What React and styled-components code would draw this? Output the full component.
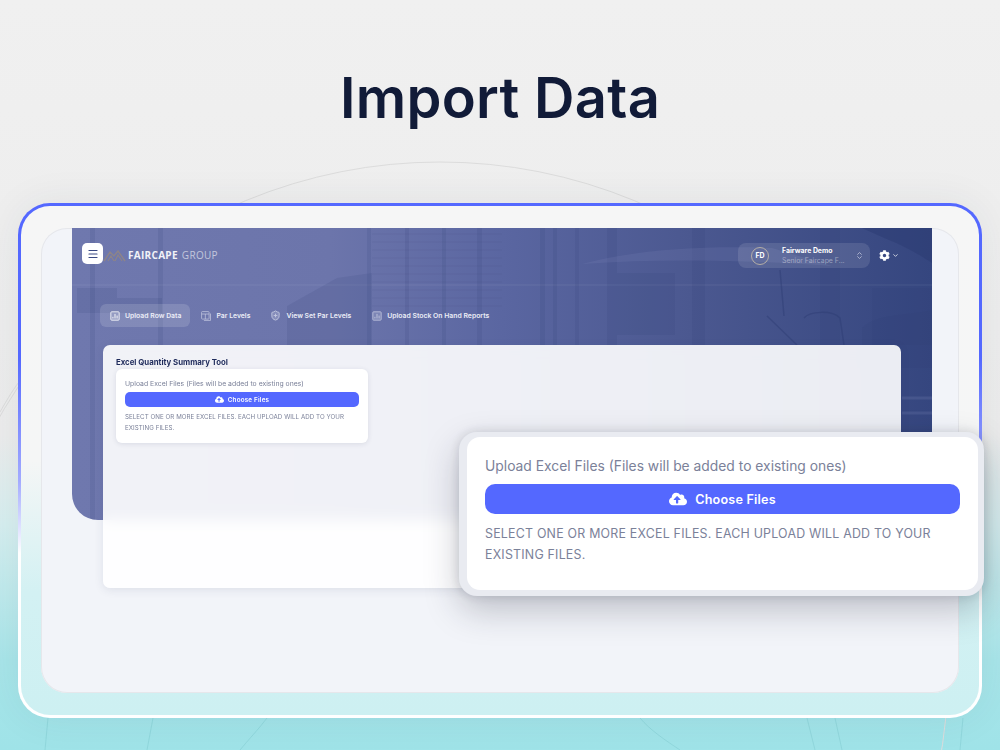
import styled, { createGlobalStyle } from "styled-components";
import { ChevronDown, ChevronsUpDown, Menu, ShieldPlus } from "lucide-react";
import { FaCloudUploadAlt, FaCog } from "react-icons/fa";

const GlobalStyle = createGlobalStyle`
  html, body {
    margin: 0;
    padding: 0;
  }
  body {
    font-family: Inter, "Liberation Sans", sans-serif;
  }
`;

const Page = styled.div`
  position: relative;
  width: 1000px;
  height: 750px;
  overflow: hidden;
  box-sizing: border-box;
  padding: 62px 18px 0;
  display: flex;
  flex-direction: column;
  align-items: center;
  background: linear-gradient(180deg, #f0f0f0 0%, #ececec 58%, #d6eeef 70%, #a8e5e9 88%, #9fe3e8 100%);
`;

const Arcs = styled.svg`
  position: absolute;
  inset: 0;
  width: 1000px;
  height: 750px;
`;

const Title = styled.h1`
  position: relative;
  margin: 0;
  height: 72px;
  font-size: 56px;
  line-height: 72px;
  font-weight: 600;
  letter-spacing: 0.3px;
  color: #111b38;
`;

const Frame = styled.div`
  position: relative;
  margin-top: 69px;
  width: 964px;
  height: 515px;
  box-sizing: border-box;
  padding: 3px;
  border-radius: 32px;
  background: linear-gradient(180deg, #5468ff 0%, #5468ff 30%, #a3abff 54%, #ffffff 68%, #ffffff 100%);
  box-shadow: 0 0 40px rgba(40, 50, 70, 0.07);
`;

const FrameInner = styled.div`
  height: 100%;
  box-sizing: border-box;
  padding: 22px 20px;
  border-radius: 29px;
  background: linear-gradient(180deg, #f6f6f6 0%, #f5f6f6 50%, #d3f1f3 76%, #cdf0f2 100%);
`;

const Panel = styled.div`
  position: relative;
  height: 100%;
  box-sizing: border-box;
  padding: 0 27px 0 31px;
  display: grid;
  grid-template-columns: 1fr;
  grid-template-rows: 1fr;
  border-radius: 26px;
  background: #f2f4f9;
  box-shadow: inset 0 0 0 1px #e6e7eb;
`;

const Hero = styled.section`
  grid-area: 1 / 1;
  position: relative;
  align-self: start;
  height: 292px;
  box-sizing: border-box;
  padding: 15px 33px 0 10px;
  overflow: hidden;
  border-radius: 0 0 0 26px;
  background: linear-gradient(90deg, #6f78ae 0%, #6c75ab 30%, #5a66a1 50%, #4b5890 72%, #35467f 100%);
`;

const Scene = styled.svg`
  position: absolute;
  inset: 0;
  width: 860px;
  height: 292px;
`;

const TopBar = styled.header`
  position: relative;
  display: flex;
  align-items: flex-start;
`;

const MenuButton = styled.button`
  position: relative;
  width: 21px;
  height: 21px;
  padding: 0;
  display: flex;
  align-items: center;
  justify-content: center;
  border: 0;
  border-radius: 5px;
  background: #fff;
  color: #3a4a83;
`;

const Logo = styled.div`
  display: flex;
  align-items: center;
  gap: 2px;
  height: 24px;
  margin-right: auto;
`;

const Brand = styled.span`
  font-family: "Open Sans", sans-serif;
  font-size: 10px;
  letter-spacing: 0.3px;
  font-weight: 700;
  color: #f1f2f8;
  b {
    margin-left: 4px;
    font-weight: 400;
    color: #c3c7dc;
  }
`;

const UserPill = styled.div`
  width: 132px;
  height: 25px;
  box-sizing: border-box;
  padding: 0 6px 0 13px;
  display: flex;
  align-items: center;
  border-radius: 8px;
  background: rgba(255, 255, 255, 0.11);
  color: #fff;
`;

const Avatar = styled.div`
  flex: none;
  width: 18px;
  height: 18px;
  box-sizing: border-box;
  display: flex;
  align-items: center;
  justify-content: center;
  margin-right: 13px;
  border: 1px solid #b5aea6;
  border-radius: 50%;
  font-size: 7px;
  font-weight: 700;
`;

const UserText = styled.div`
  flex: 1;
  display: flex;
  flex-direction: column;
  gap: 2px;
  font-size: 6.9px;
  line-height: 8px;
`;

const UserName = styled.span`
  font-weight: 700;
`;

const UserRole = styled.span`
  color: rgba(255, 255, 255, 0.42);
`;

const Settings = styled.div`
  display: flex;
  align-items: center;
  gap: 2px;
  height: 25px;
  margin-left: 9px;
  color: #fff;
`;

const Nav = styled.nav`
  position: relative;
  display: flex;
  align-items: center;
  margin: 36px 0 0 18px;
`;

const NavItem = styled.a`
  display: flex;
  align-items: center;
  gap: 5px;
  height: 23px;
  box-sizing: border-box;
  padding: 0 9px 0 10px;
  margin-right: ${({ $gap }) => $gap}px;
  border-radius: 6px;
  background: ${({ $active }) => ($active ? "rgba(255, 255, 255, 0.14)" : "transparent")};
  font-size: 6.85px;
  font-weight: 600;
  color: #eceef7;
  white-space: nowrap;
`;

const IconBox = styled.svg`
  flex: none;
  width: 10px;
  height: 10px;
  color: ${({ $active }) => ($active ? "#fff" : "#c2c7df")};
`;

const Card = styled.main`
  grid-area: 1 / 1;
  position: relative;
  margin: 117px 31px 105px;
  box-sizing: border-box;
  padding: 12px 13px;
  border-radius: 7px;
  background: rgba(255, 255, 255, 0.9);
  backdrop-filter: blur(7px);
  box-shadow: 0 2px 10px rgba(40, 50, 90, 0.1);
`;

const CardTitle = styled.h2`
  margin: 0 0 2px;
  font-size: 7.8px;
  line-height: 10px;
  font-weight: 700;
  color: #1e2a5a;
`;

const UploadBox = styled.div`
  width: ${({ $large }) => ($large ? "511px" : "252px")};
  box-sizing: border-box;
  padding: ${({ $large }) => ($large ? "20px 18px 25px" : "10px 9px 10px")};
  border-radius: ${({ $large }) => ($large ? "13px" : "6px")};
  background: #fff;
  box-shadow: ${({ $large }) => ($large ? "none" : "0 1px 5px rgba(40, 50, 90, 0.12)")};
`;

const UploadLabel = styled.div`
  font-size: ${({ $large }) => ($large ? "13.85px" : "6.85px")};
  line-height: ${({ $large }) => ($large ? "18px" : "9px")};
  color: #7b8199;
`;

const ChooseButton = styled.button`
  width: 100%;
  height: ${({ $large }) => ($large ? "30px" : "15px")};
  margin: ${({ $large }) => ($large ? "9px 0 9px" : "4px 0 4px")};
  padding: 0;
  display: flex;
  align-items: center;
  justify-content: center;
  gap: ${({ $large }) => ($large ? "8px" : "4px")};
  border: 0;
  border-radius: ${({ $large }) => ($large ? "10px" : "5px")};
  background: #5468ff;
  color: #fff;
  font-family: inherit;
  font-size: ${({ $large }) => ($large ? "12.6px" : "6.3px")};
  font-weight: 600;
  letter-spacing: 0.2px;
`;

const UploadNote = styled.p`
  margin: 0;
  font-size: ${({ $large }) => ($large ? "12.4px" : "6.2px")};
  letter-spacing: ${({ $large }) => ($large ? "0.22px" : "0.05px")};
  line-height: ${({ $large }) => ($large ? "21px" : "11px")};
  color: #7b8199;
`;

const Callout = styled.aside`
  position: absolute;
  left: 418px;
  top: 204px;
  padding: 5px 6px 6px 8px;
  border-radius: 18px;
  background: #e9ebf1;
  box-shadow: 0 14px 34px rgba(30, 35, 55, 0.25), 0 0 12px rgba(30, 35, 55, 0.14);
`;

// small icons from the tab row
function ChartIcon({ active }) {
  return (
    <IconBox $active={active} viewBox="0 0 12 12" fill="none">
      <rect x="1" y="1" width="10" height="10" rx="1" stroke="currentColor" fill="rgba(255,255,255,.15)" />
      <path d="M3.5 9V7M6 9V3.5M8.5 9V5.5" stroke="currentColor" strokeWidth="1.1" />
    </IconBox>
  );
}

function TableIcon() {
  return (
    <IconBox $active={false} viewBox="0 0 12 12" fill="none">
      <rect x="0.7" y="0.7" width="9" height="9" rx="1" stroke="currentColor" strokeWidth="0.9" />
      <path d="M0.7 3.6H9.7M5.2 3.6V9.7M11.4 3V11.3H3.5" stroke="currentColor" strokeWidth="0.9" />
    </IconBox>
  );
}

function App() {
  return (
    <Page>
      <GlobalStyle />
      <Arcs viewBox="0 0 1000 750" fill="none">
        <circle cx="440" cy="670" r="508" stroke="#dcdcdc" />
        <path d="M0 412C8 398 14 388 22 378" stroke="#dcdcdc" />
        <path
          d="M48 718L45 750M153 718L147 750M267 718C258 730 248 740 240 750M807 718L815 750M835 718L842 750M963 718L960 750M640 718C650 730 665 740 680 750"
          stroke="#86ced3"
          strokeOpacity=".6"
        />
      </Arcs>
      <Title>Import Data</Title>
      <Frame>
        <FrameInner>
          <Panel>
            <Hero>
              <Scene viewBox="0 0 860 292" fill="none">
                <path d="M0 57H860" stroke="#fff" strokeOpacity=".08" />
                <g fill="#2d3c74" fillOpacity=".13">
                  <rect x="18" y="0" width="5" height="292" />
                  <rect x="86" y="0" width="5" height="117" />
                  <rect x="295" y="0" width="4" height="117" />
                  <rect x="333" y="0" width="4" height="117" />
                  <rect x="370" y="0" width="4" height="117" />
                  <rect x="405" y="0" width="5" height="117" />
                  <rect x="468" y="0" width="5" height="117" />
                  <rect x="481" y="0" width="4" height="117" />
                  <rect x="503" y="0" width="4" height="117" />
                  <rect x="535" y="0" width="10" height="117" />
                  <rect x="620" y="0" width="13" height="117" />
                  <rect x="748" y="0" width="20" height="117" />
                  <rect x="545" y="45" width="58" height="62" />
                  <path d="M215 78L265 50L300 45V117H215Z" />
                  <path d="M5 60H45V85H5ZM40 70H90V85H40Z" />
                  <path d="M790 100C805 85 835 88 860 82V140H790Z" />
                  <path d="M800 60H860V117H800Z" />
                </g>
                <path
                  d="M300 6H430M300 14H430M300 22H430M300 30H430M300 38H430M300 46H430M300 54H430M300 62H430M300 70H430M300 78H430"
                  stroke="#2d3c74"
                  strokeOpacity=".08"
                />
                <path d="M510 36C570 20 640 18 700 20L760 38C680 32 590 30 510 36Z" fill="#8c97c4" fillOpacity=".14" />
                <path
                  d="M695 88L725 117M732 90C738 83 760 82 768 90L772 117M708 42L712 88"
                  stroke="#2a3970"
                  strokeOpacity=".4"
                  strokeWidth="1.5"
                />
                <path d="M790 0C810 10 830 15 860 35V0Z" fill="#2a3a72" fillOpacity=".45" />
                <path d="M830 230C845 222 850 225 860 228V292H830Z" fill="#5c6a9d" fillOpacity=".35" />
                <path d="M830 170H860M830 185H860" stroke="#6b78aa" strokeOpacity=".3" strokeWidth="3" />
              </Scene>
              <TopBar>
                <MenuButton>
                  <Menu size={12} strokeWidth={2.4} />
                </MenuButton>
                <Logo>
                  <svg width="23" height="13" viewBox="0 0 23 13" fill="none">
                    <path d="M1 12L7 3L11 7L15 2L22 12" stroke="#8d8488" strokeWidth="1.4" />
                    <path d="M5 12L8 7L11 12M12 12L15 6L19 12" stroke="#8d8488" strokeWidth="1.2" />
                  </svg>
                  <Brand>
                    FAIRCAPE<b>GROUP</b>
                  </Brand>
                </Logo>
                <UserPill>
                  <Avatar>FD</Avatar>
                  <UserText>
                    <UserName>Fairware Demo</UserName>
                    <UserRole>Senior Faircape F...</UserRole>
                  </UserText>
                  <ChevronsUpDown size={9} color="#c5c9de" />
                </UserPill>
                <Settings>
                  <FaCog size={11} />
                  <ChevronDown size={7} strokeWidth={2.5} />
                </Settings>
              </TopBar>
              <Nav>
                <NavItem $active $gap={1}>
                  <ChartIcon active />
                  Upload Row Data
                </NavItem>
                <NavItem $gap={1}>
                  <TableIcon />
                  Par Levels
                </NavItem>
                <NavItem $gap={2}>
                  <ShieldPlus size={11} color="#c2c7df" fill="rgba(255,255,255,.18)" />
                  View Set Par Levels
                </NavItem>
                <NavItem $gap={0}>
                  <ChartIcon />
                  Upload Stock On Hand Reports
                </NavItem>
              </Nav>
            </Hero>
            <Card>
              <CardTitle>Excel Quantity Summary Tool</CardTitle>
              <UploadBox>
                <UploadLabel>Upload Excel Files (Files will be added to existing ones)</UploadLabel>
                <ChooseButton>
                  <FaCloudUploadAlt size={9} />
                  Choose Files
                </ChooseButton>
                <UploadNote>SELECT ONE OR MORE EXCEL FILES. EACH UPLOAD WILL ADD TO YOUR EXISTING FILES.</UploadNote>
              </UploadBox>
            </Card>
            <Callout>
              <UploadBox $large>
                <UploadLabel $large>Upload Excel Files (Files will be added to existing ones)</UploadLabel>
                <ChooseButton $large>
                  <FaCloudUploadAlt size={18} />
                  Choose Files
                </ChooseButton>
                <UploadNote $large>SELECT ONE OR MORE EXCEL FILES. EACH UPLOAD WILL ADD TO YOUR EXISTING FILES.</UploadNote>
              </UploadBox>
            </Callout>
          </Panel>
        </FrameInner>
      </Frame>
    </Page>
  );
}

export default App;
